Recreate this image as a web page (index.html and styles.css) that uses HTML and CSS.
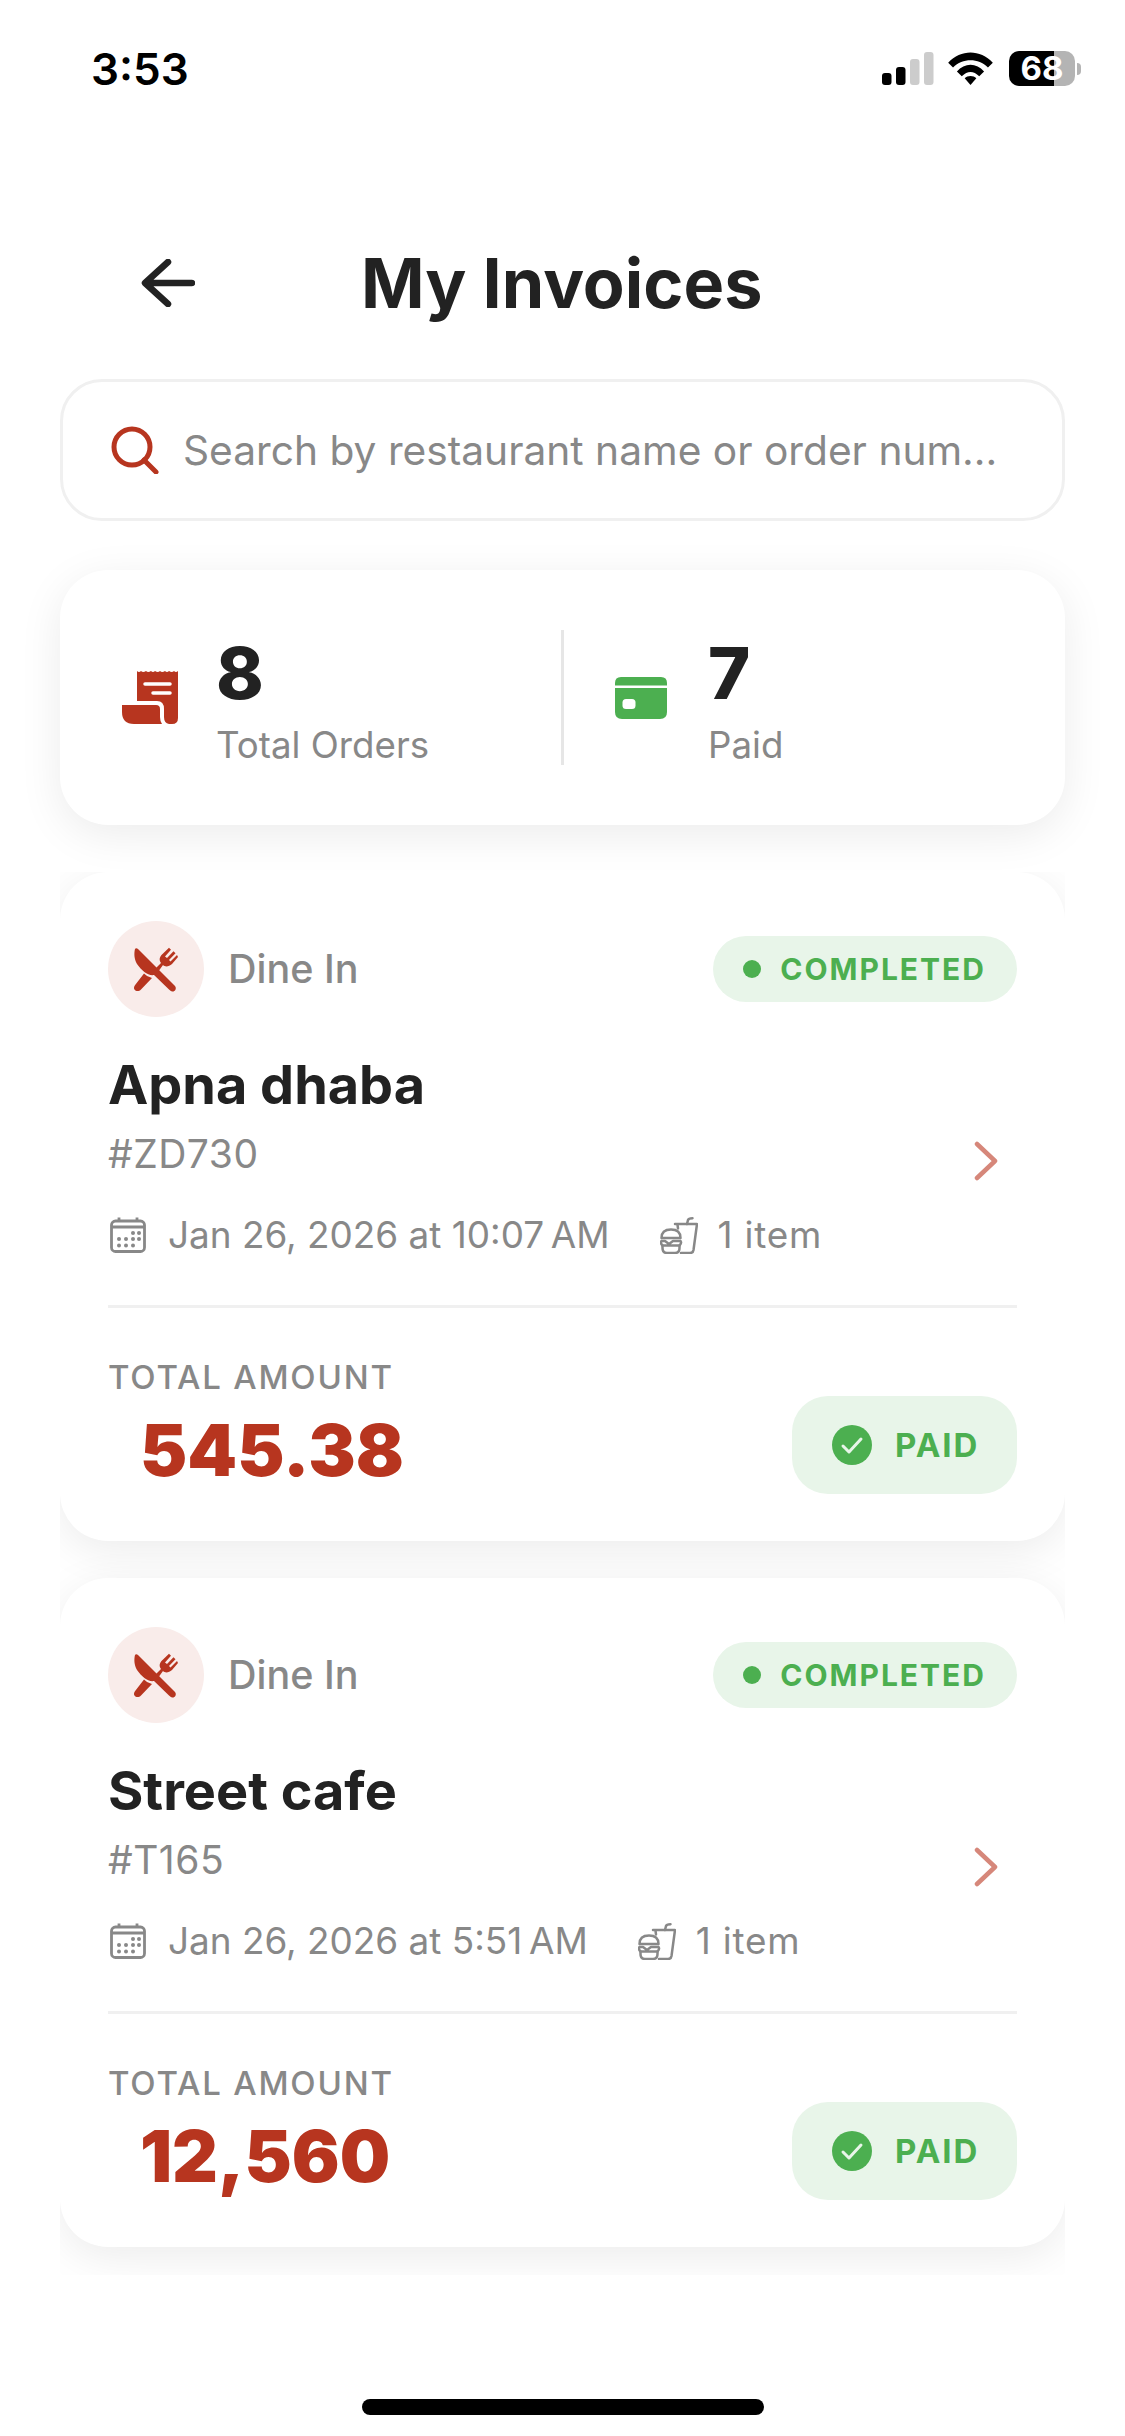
FILE: index.html
```html
<!DOCTYPE html>
<html lang="en">
<head>
    <meta charset="UTF-8">
    <meta name="viewport" content="width=device-width, initial-scale=1.0">
    <title>My Invoices</title>
    <link rel="stylesheet" href="styles.css">
</head>
<body>
    <svg class="sprites" width="0" height="0">
        <symbol id="cutlery" viewBox="0 0 44 45">
            <path d="M1 2 C1.500 1 3 1 4 2 L41 39 C43 41.500 41 45 38 44.500 Q36.500 44 35 42.500 L20 28 C14 29 8 24 3 17 C0 12 0 6 1 2 Z"/>
            <path d="M10 26.500 Q13 30 18 31 L7 42.500 C5 44.500 2 44.500 0.500 42.500 C-0.500 41 0 39 1.500 37.500 Z"/>
            <path d="M22 21 L27 16 C24.500 12.500 26 9.500 28 7.500 L35 0.700 L37 2.700 L31 9.500 L33 11 L39.500 4.300 L41.500 6.300 L35 13 L36.500 14.500 L43 8 L44 10 L38 17 C35 19.500 31.500 20.500 29 18 L25 23.500 Z"/>
        </symbol>
        <symbol id="calendar" viewBox="0 0 36 36">
            <g fill="none" stroke="currentColor" stroke-width="2.800">
                <rect x="1.500" y="4" width="33" height="30.500" rx="4"/>
                <path d="M1.500 10 H34.500 M9 0.500 V5 M27 0.500 V5"/>
            </g>
            <g fill="currentColor">
                <circle cx="23" cy="16" r="2"/><circle cx="29" cy="16" r="2"/>
                <circle cx="9" cy="22" r="2"/><circle cx="16" cy="22" r="2"/><circle cx="23" cy="22" r="2"/><circle cx="29" cy="22" r="2"/>
                <circle cx="9" cy="28.500" r="2"/><circle cx="16" cy="28.500" r="2"/><circle cx="23" cy="28.500" r="2"/>
            </g>
        </symbol>
        <symbol id="combo" viewBox="0 0 38 37">
            <g fill="none" stroke="currentColor" stroke-width="2.500" stroke-linejoin="round" stroke-linecap="round">
                <path d="M15 7 H37 L33.500 33 Q33 36 30 36 H21"/>
                <path d="M17.500 7.500 L18 11.500"/>
                <path d="M27 7 L28 3 Q28.500 1.500 32.500 1.300"/>
                <path d="M1.500 21 Q1.500 12.500 11 12.500 Q20.500 12.500 20.500 21 Z"/>
                <path d="M1.500 24 H5 L9 27 L13 24 H20.500 M1.500 24 Q0 26 2.500 28.500 H19.500 Q22 26 20.500 24"/>
                <path d="M2.500 28.500 V31 Q2.500 36 7 36 H15 Q19.500 36 19.500 31 V28.500"/>
            </g>
        </symbol>
        <symbol id="chevron" viewBox="0 0 24 40">
            <path d="M3 3 L21 20 L3 37" fill="none" stroke="currentColor" stroke-width="4.500" stroke-linecap="round" stroke-linejoin="round"/>
        </symbol>
        <symbol id="check" viewBox="0 0 40 40">
            <circle cx="20" cy="20" r="20" fill="currentColor"/>
            <path d="M11 21 L17 27 L29 14" fill="none" stroke="#e8f5e9" stroke-width="3" stroke-linecap="round" stroke-linejoin="round"/>
        </symbol>
    </svg>

    <div class="status-bar">
        <span class="clock">3:53</span>
        <div class="status-icons">
            <svg class="signal" width="52" height="33" viewBox="0 0 52 33">
                <rect x="0" y="21" width="9.500" height="12" rx="3" fill="#000"/>
                <rect x="14" y="15" width="9.500" height="18" rx="3" fill="#000"/>
                <rect x="28" y="7" width="9.500" height="26" rx="3" fill="#ccc"/>
                <rect x="42" y="0" width="9.500" height="33" rx="3" fill="#ccc"/>
            </svg>
            <svg class="wifi" width="45" height="33" viewBox="0 0 46 34">
                <path d="M0 11 C13 -3 33 -3 46 11 L41 16 C31 6 15 6 5 16 Z"/>
                <path d="M9 20 C17 11 29 11 37 20 L32 25 C26 19 20 19 14 25 Z"/>
                <path d="M17 27 C20 24 26 24 29 27 L23 34 Z"/>
            </svg>
            <div class="battery">
                <div class="battery-body">68</div>
                <div class="battery-cap"></div>
            </div>
        </div>
    </div>

    <header class="page-header">
        <svg class="back" width="54" height="48" viewBox="0 0 54 48">
            <path d="M27 3 L4 24 L27 45 M5 24 H51" fill="none" stroke="#222" stroke-width="6.500" stroke-linecap="round" stroke-linejoin="round"/>
        </svg>
        <h1>My Invoices</h1>
    </header>

    <main class="content">
        <div class="search">
            <svg class="search-icon" width="48" height="48" viewBox="0 0 48 48">
                <circle cx="21" cy="21" r="18" fill="none" stroke="#b7351f" stroke-width="5"/>
                <path d="M33 34 L45 46" fill="none" stroke="#b7351f" stroke-width="5" stroke-linecap="round"/>
            </svg>
            <span class="placeholder">Search by restaurant name or order num...</span>
        </div>

        <div class="stats">
            <div class="stat stat-orders">
                <svg width="56" height="53" viewBox="0 0 56 53">
                    <path fill="#b7351f" d="M15 0 Q17 2 19 0 Q21 2 24 0 Q26 2 29 0 Q31 2 33 0 Q36 2 38 0 Q40 2 43 0 Q45 2 47 0 Q50 2 52 0 Q54 2 56 0 V47 Q56 53 50 53 H47 Q42 52 42 46 V38 Q42 30 35 30 H15 Z"/>
                    <path fill="#b7351f" d="M0 34 H34 Q38 34 38 38 V46 Q38 50 40 53 H12 Q0 53 0 41 Z"/>
                    <path d="M23 13 H48 M31 22 H48" stroke="#fff" stroke-width="3.500" stroke-linecap="round"/>
                </svg>
                <div class="stat-text">
                    <div class="stat-value">8</div>
                    <div class="stat-label">Total Orders</div>
                </div>
            </div>
            <div class="stat-divider"></div>
            <div class="stat stat-paid">
                <svg width="52" height="42" viewBox="0 0 52 42">
                    <path fill="#4caf50" d="M0 6 Q0 0 6 0 H46 Q52 0 52 6 V8.500 H0 Z M0 11 H52 V35 Q52 42 45 42 H7 Q0 42 0 35 Z"/>
                    <rect x="7.500" y="22" width="13" height="10" rx="3.500" fill="#fff"/>
                </svg>
                <div class="stat-text">
                    <div class="stat-value">7</div>
                    <div class="stat-label">Paid</div>
                </div>
            </div>
        </div>

        <div class="invoice-list">
            <article class="invoice">
                <div class="invoice-top">
                    <div class="type-icon"><svg width="44" height="45"><use href="#cutlery"/></svg></div>
                    <span class="type-label">Dine In</span>
                    <span class="status-pill"><i class="dot"></i>COMPLETED</span>
                </div>
                <div class="invoice-main">
                    <div>
                        <h2>Apna dhaba</h2>
                        <div class="order-no">#ZD730</div>
                    </div>
                    <svg class="chevron" width="24" height="40"><use href="#chevron"/></svg>
                </div>
                <div class="meta">
                    <svg class="meta-cal" width="36" height="36"><use href="#calendar"/></svg>
                    <span class="meta-date">Jan 26, 2026 at 10:07&#8239;AM</span>
                    <svg width="38" height="37"><use href="#combo"/></svg>
                    <span class="meta-count">1 item</span>
                </div>
                <div class="invoice-foot">
                    <div>
                        <div class="total-label">TOTAL AMOUNT</div>
                        <div class="amount">545.38</div>
                    </div>
                    <div class="paid-pill"><svg width="40" height="40"><use href="#check"/></svg>PAID</div>
                </div>
            </article>

            <article class="invoice">
                <div class="invoice-top">
                    <div class="type-icon"><svg width="44" height="45"><use href="#cutlery"/></svg></div>
                    <span class="type-label">Dine In</span>
                    <span class="status-pill"><i class="dot"></i>COMPLETED</span>
                </div>
                <div class="invoice-main">
                    <div>
                        <h2>Street cafe</h2>
                        <div class="order-no">#T165</div>
                    </div>
                    <svg class="chevron" width="24" height="40"><use href="#chevron"/></svg>
                </div>
                <div class="meta">
                    <svg class="meta-cal" width="36" height="36"><use href="#calendar"/></svg>
                    <span class="meta-date">Jan 26, 2026 at 5:51&#8239;AM</span>
                    <svg width="38" height="37"><use href="#combo"/></svg>
                    <span class="meta-count">1 item</span>
                </div>
                <div class="invoice-foot">
                    <div>
                        <div class="total-label">TOTAL AMOUNT</div>
                        <div class="amount">12,560</div>
                    </div>
                    <div class="paid-pill"><svg width="40" height="40"><use href="#check"/></svg>PAID</div>
                </div>
            </article>
        </div>
    </main>

    <div class="home-indicator"></div>
</body>
</html>
```

FILE: styles.css
```css
* {
    box-sizing: border-box;
}
html, body {
    margin: 0;
    padding: 0;
    height: 2436px;
    overflow: hidden;
    background: #fff;
}
body {
    position: relative;
    font-family: Inter, "Noto Sans", sans-serif;
    color: #222;
}
.sprites {
    display: block;
    height: 0;
}

/* status bar */
.status-bar {
    height: 136px;
    padding: 41px 44px 0 91px;
    display: flex;
    justify-content: space-between;
    align-items: flex-start;
}
.clock {
    font-size: 44px;
    line-height: 56px;
    font-weight: 600;
    color: #000;
}
.status-icons {
    display: flex;
    align-items: center;
    gap: 14px;
    padding-top: 10px;
}
.battery {
    display: flex;
    align-items: center;
    gap: 2px;
    margin-left: 2px;
}
.battery-body {
    width: 66px;
    height: 35px;
    border-radius: 10px;
    background: linear-gradient(90deg, #000 68%, #b4b4b4 68%);
    color: #fff;
    font-size: 33px;
    font-weight: 700;
    line-height: 35px;
    text-align: center;
}
.battery-cap {
    width: 4px;
    height: 12px;
    border-radius: 0 4px 4px 0;
    background: #b4b4b4;
}

/* header */
.page-header {
    height: 243px;
    padding: 108px 60px 0 141px;
    display: flex;
    align-items: flex-start;
}
.back {
    margin-top: 15px;
}
.page-header h1 {
    margin: 0 0 0 166px;
    font-size: 68.300px;
    line-height: 78px;
    font-weight: 700;
    color: #222;
}

.content {
    padding: 0 60px;
}

/* search */
.search {
    height: 142px;
    border: 3px solid #f0f0f0;
    border-radius: 42px;
    padding: 0 40px 0 48px;
    display: flex;
    align-items: center;
    gap: 24px;
}
.search-icon {
    flex: none;
}
.placeholder {
    font-size: 40.700px;
    color: #888;
    white-space: nowrap;
}

/* stats */
.stats {
    margin-top: 49px;
    height: 255px;
    border-radius: 48px;
    background: #fff;
    box-shadow: 0 10px 44px rgba(0, 0, 0, 0.08);
    display: flex;
    align-items: center;
}
.stat {
    flex: 1;
    display: flex;
    align-items: center;
}
.stat-orders {
    gap: 38px;
}
.stat-orders svg {
    margin-left: 62px;
}
.stat-paid {
    gap: 41px;
}
.stat-paid svg {
    margin-left: 51px;
}
.stat-text {
    padding-top: 3px;
}
.stat-value {
    font-size: 72px;
    line-height: 84px;
    font-weight: 800;
    color: #222;
}
.stat-label {
    font-size: 36.700px;
    line-height: 46px;
    color: #888;
    margin-top: 7px;
}
.stat-divider {
    width: 3px;
    height: 135px;
    background: #e6e6e6;
}

/* invoices */
.invoice-list {
    margin-top: 47px;
    height: 1403px;
    overflow: hidden;
    display: flex;
    flex-direction: column;
    gap: 37px;
}
.invoice {
    flex: none;
    height: 669px;
    padding: 49px 48px 0;
    border-radius: 48px;
    background: #fff;
    box-shadow: 0 10px 44px rgba(0, 0, 0, 0.08);
}
.invoice-top {
    display: flex;
    align-items: center;
}
.type-icon {
    width: 96px;
    height: 96px;
    border-radius: 50%;
    background: #f9ecea;
    display: flex;
    align-items: center;
    justify-content: center;
}
.type-icon svg {
    fill: #b7351f;
}
.type-label {
    margin-left: 24px;
    font-size: 39.500px;
    font-weight: 500;
    color: #888;
}
.status-pill {
    margin-left: auto;
    height: 66px;
    padding: 0 31px 0 30px;
    border-radius: 33px;
    background: #e8f5e9;
    color: #4caf50;
    font-size: 30px;
    font-weight: 700;
    letter-spacing: 2px;
    display: flex;
    align-items: center;
    gap: 19px;
}
.dot {
    width: 18px;
    height: 18px;
    border-radius: 50%;
    background: #4caf50;
}
.invoice-main {
    margin-top: 36px;
    display: flex;
    justify-content: space-between;
    align-items: flex-end;
    padding-right: 19px;
}
.invoice-main h2 {
    margin: 0;
    font-size: 54px;
    line-height: 64px;
    font-weight: 700;
    color: #222;
}
.order-no {
    margin-top: 13px;
    font-size: 39px;
    line-height: 48px;
    letter-spacing: 0.500px;
    color: #888;
}
.chevron {
    color: #d6877a;
    margin-bottom: -3px;
}
.meta {
    margin-top: 34px;
    display: flex;
    align-items: center;
    font-size: 36.900px;
    line-height: 46px;
    color: #888;
}
.meta svg {
    flex: none;
    margin-right: 20px;
    color: #888;
}
.meta .meta-cal {
    margin-left: 2px;
    margin-right: 22px;
}
.meta-date {
    margin-right: 50px;
}
.meta-count {
    letter-spacing: 0.800px;
}
.invoice-foot {
    margin-top: 47px;
    border-top: 3px solid #f0f0f0;
    padding-top: 48px;
    display: flex;
    justify-content: space-between;
    align-items: flex-end;
}
.total-label {
    font-size: 33px;
    line-height: 42px;
    font-weight: 500;
    letter-spacing: 1.800px;
    color: #888;
}
.amount {
    margin: 9px 0 0 32px;
    font-size: 71px;
    line-height: 87px;
    font-weight: 900;
    color: #b7351f;
}
.paid-pill {
    width: 225px;
    height: 98px;
    padding-left: 40px;
    border-radius: 36px;
    background: #e8f5e9;
    color: #4caf50;
    font-size: 33px;
    font-weight: 700;
    letter-spacing: 2px;
    display: flex;
    align-items: center;
    gap: 23px;
}
.home-indicator {
    position: absolute;
    left: 362px;
    bottom: 21px;
    width: 402px;
    height: 16px;
    border-radius: 8px;
    background: #000;
}
```
